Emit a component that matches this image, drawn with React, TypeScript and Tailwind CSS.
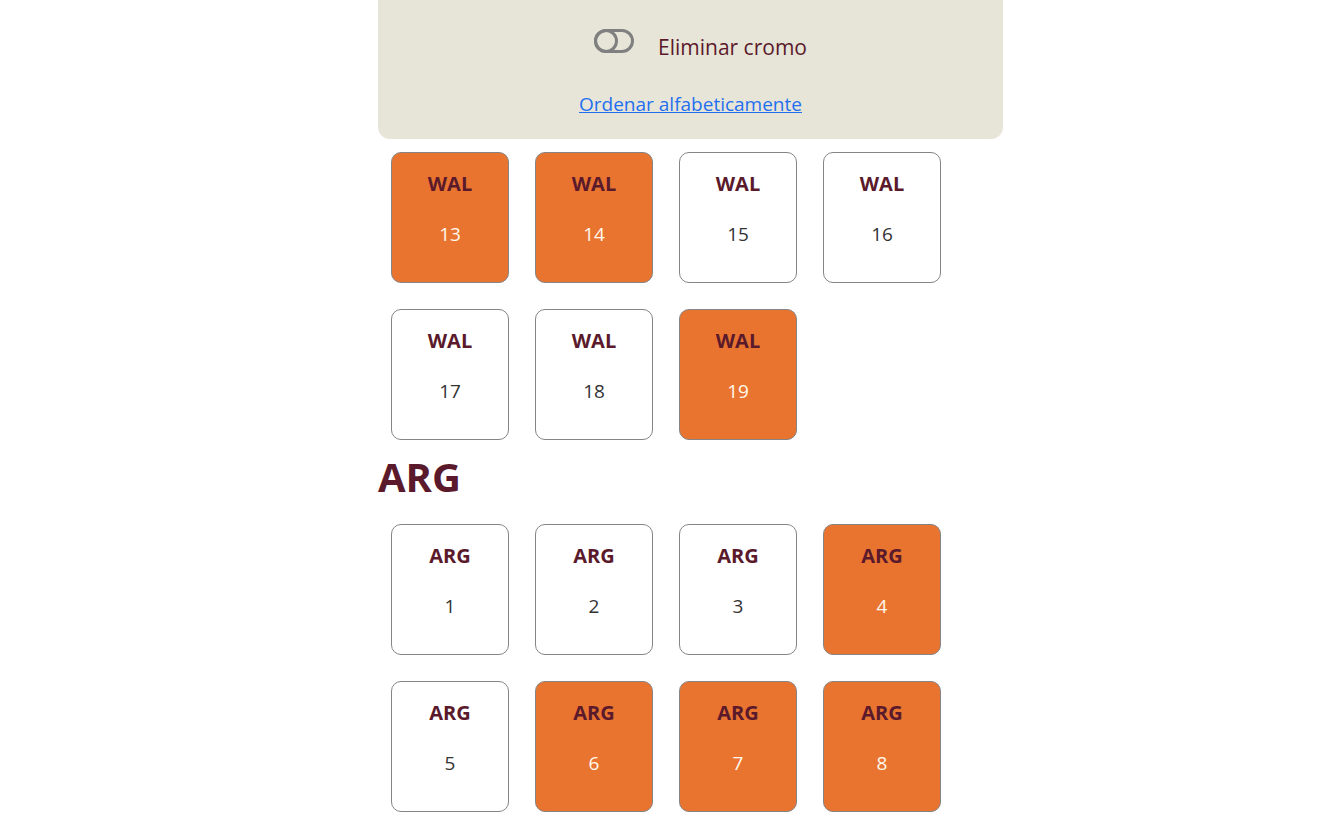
import { FC } from "react";

type Cromo = { team: string; num: number; owned: boolean };

const wal: Cromo[] = [13, 14, 15, 16, 17, 18, 19].map((n) => ({
  team: "WAL",
  num: n,
  owned: [13, 14, 19].includes(n)
}));

const arg: Cromo[] = [1, 2, 3, 4, 5, 6, 7, 8].map((n) => ({
  team: "ARG",
  num: n,
  owned: [4, 6, 7, 8].includes(n)
}));

const ToggleIcon: FC = () => (
  <svg width="40" height="24" viewBox="0 0 40 24" fill="none">
    <rect x="1.5" y="1.5" width="37" height="21" rx="10.5" stroke="#808080" strokeWidth="3" />
    <circle cx="12" cy="12" r="10.5" stroke="#808080" strokeWidth="3" />
  </svg>
);

const Card: FC<{ c: Cromo }> = ({ c }) => (
  <div
    className={`m-[13px] flex h-[131px] w-[118px] flex-col items-center rounded-[10px] border border-[#858585] pt-[19px] ${
      c.owned ? "bg-[#e97430]" : "bg-white"
    }`}
  >
    <p className="text-[20px] font-bold leading-[24px] text-[#5b1a2b]">{c.team}</p>
    <p
      className={`mt-[26px] text-[19px] leading-[24px] ${
        c.owned ? "text-[#fff8ec]" : "text-[#333333]"
      }`}
    >
      {c.num}
    </p>
  </div>
);

export default function App() {
  return (
    <div className="min-h-screen bg-white font-['Open_Sans',sans-serif]">
      <div className="ml-[378px] w-[625px]">
        <div className="flex h-[139px] flex-col items-center rounded-b-[12px] bg-[#e7e5d8]">
          <div className="mt-[29px] flex items-start gap-[24px] pl-5">
            <ToggleIcon />
            <span className="mt-[4px] text-[21px] leading-[28px] text-[#5b1a2b]">Eliminar cromo</span>
          </div>
          <a href="#" className="mt-[30px] text-[19px] leading-[26px] text-[#1f6ff0] underline">
            Ordenar alfabeticamente
          </a>
        </div>
        <div className="flex w-[590px] flex-wrap">
          {wal.map((c) => (
            <Card key={c.num} c={c} />
          ))}
        </div>
        <h2 className="mb-[10px] text-[40px] font-bold leading-[48px] text-[#5b1a2b]">ARG</h2>
        <div className="flex w-[590px] flex-wrap">
          {arg.map((c) => (
            <Card key={c.num} c={c} />
          ))}
        </div>
      </div>
    </div>
  );
}
